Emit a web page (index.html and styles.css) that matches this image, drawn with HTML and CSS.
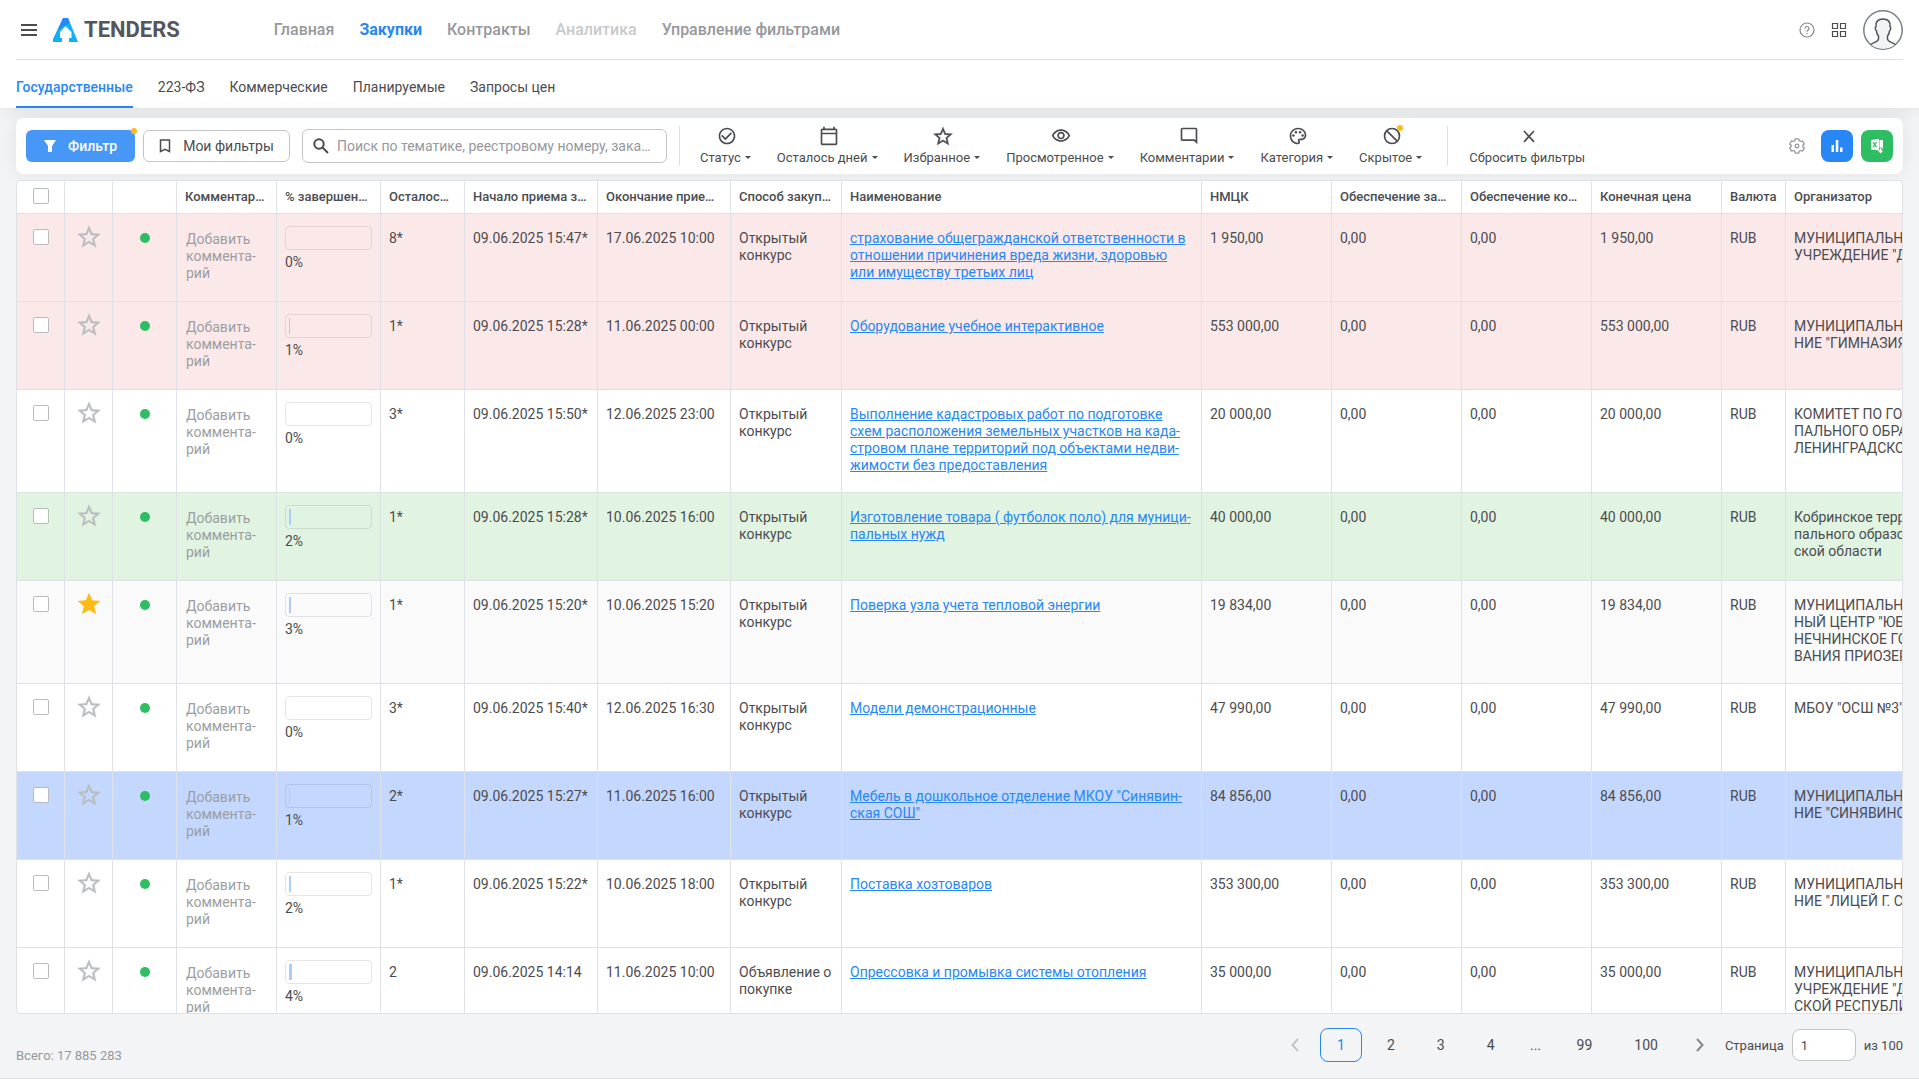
FILE: index.html
```html
<!doctype html>
<html lang="ru">
<head>
<meta charset="utf-8" />
<meta name="viewport" content="width=device-width,initial-scale=1" />
<title>Tenders - Закупки</title>
<link rel="stylesheet" href="styles.css">
</head>
<body>

<!-- icon sprite -->
<svg class="sprite" aria-hidden="true">
  <symbol id="i-star" viewBox="1.500 1.500 21 20"><path stroke="currentColor" stroke-width=".3" d="M22 9.24l-7.19-.62L12 2 9.19 8.63 2 9.24l5.46 4.73L5.82 21 12 17.27 18.18 21l-1.63-7.03L22 9.24zM12 15.4l-3.76 2.27 1-4.28-3.32-2.88 4.38-.38L12 6.1l1.71 4.04 4.38.38-3.32 2.88 1 4.28L12 15.4z"/></symbol>
  <symbol id="i-star-full" viewBox="1.500 1.500 21 20"><path d="M12 17.27L18.18 21l-1.64-7.03L22 9.24l-7.19-.61L12 2 9.19 8.63 2 9.24l5.46 4.73L5.82 21z"/></symbol>
  <symbol id="i-check" viewBox="0 0 24 24"><path d="M16.59 7.58L10 14.17l-3.59-3.58L5 12l5 5 8-8zM12 2C6.48 2 2 6.48 2 12s4.480 10 10 10 10-4.480 10-10S17.520 2 12 2zm0 18c-4.420 0-8-3.580-8-8s3.580-8 8-8 8 3.580 8 8-3.580 8-8 8z"/></symbol>
  <symbol id="i-calendar" viewBox="0 0 24 24"><path d="M20 3h-1V1h-2v2H7V1H5v2H4c-1.100 0-2 .9-2 2v16c0 1.100.9 2 2 2h16c1.100 0 2-.9 2-2V5c0-1.100-.9-2-2-2zm0 18H4V10h16v11zm0-13H4V5h16v3z"/></symbol>
  <symbol id="i-eye" viewBox="0 0 24 24"><path d="M12 6c3.790 0 7.170 2.130 8.820 5.500C19.170 14.870 15.790 17 12 17s-7.170-2.130-8.820-5.500C4.830 8.130 8.210 6 12 6m0-2C7 4 2.730 7.110 1 11.500 2.730 15.890 7 19 12 19s9.270-3.110 11-7.500C21.270 7.110 17 4 12 4zm0 5c1.380 0 2.500 1.120 2.500 2.500S13.380 14 12 14s-2.500-1.120-2.500-2.500S10.620 9 12 9m0-2c-2.480 0-4.500 2.020-4.500 4.500S9.520 16 12 16s4.500-2.020 4.500-4.500S14.480 7 12 7z"/></symbol>
  <symbol id="i-comment" viewBox="0 0 24 24"><path d="M22 4c0-1.100-.9-2-2-2H4c-1.100 0-2 .9-2 2v12c0 1.100.9 2 2 2h14l4 4V4zm-2 13.170L18.830 16H4V4h16v13.170z"/></symbol>
  <symbol id="i-palette" viewBox="0 0 24 24"><path d="M12 22C6.490 22 2 17.510 2 12S6.490 2 12 2s10 4.040 10 9c0 3.310-2.690 6-6 6h-1.770c-.28 0-.5.22-.5.5 0 .12.050.23.130.33.41.47.64 1.060.64 1.670A2.500 2.500 0 0 1 12 22zm0-18c-4.410 0-8 3.590-8 8s3.590 8 8 8c.28 0 .5-.22.5-.5a.54.54 0 0 0-.14-.35c-.41-.46-.63-1.050-.63-1.650a2.500 2.500 0 0 1 2.500-2.500H16c2.210 0 4-1.790 4-4 0-3.860-3.590-7-8-7z"/><circle cx="6.500" cy="11.500" r="1.500"/><circle cx="9.500" cy="7.500" r="1.500"/><circle cx="14.500" cy="7.500" r="1.500"/><circle cx="17.500" cy="11.500" r="1.500"/></symbol>
  <symbol id="i-hidden" viewBox="0 0 24 24"><circle cx="12" cy="12" r="9" fill="none" stroke="currentColor" stroke-width="2"/><path d="M5.500 5.500l13 13" stroke="currentColor" stroke-width="2"/></symbol>
  <symbol id="i-close" viewBox="0 0 24 24"><path d="M6 6l12 13M18 6L6 19" fill="none" stroke="currentColor" stroke-width="2"/></symbol>
</svg>

<header class="header">
  <div class="topbar">
    <button class="icon-btn burger" aria-label="Меню"><svg width="16" height="12" viewBox="0 0 16 12"><path d="M0 1h16M0 6h16M0 11h16" stroke="currentColor" stroke-width="2"/></svg></button>
    <a class="logo" href="#">
      <svg width="25" height="24" viewBox="0 0 25 24"><path d="M10 0h5l10 24h-9v-4h2.500v-6L12.500 8 7 14v6h2v4H0v-3z" fill="#0eb0f8"/><path d="M10 0h5l2 5-4.500 2-7.500 5z" fill="#2a86fb"/></svg>
      <span>TENDERS</span>
    </a>
    <nav class="nav">
      <a href="#">Главная</a>
      <a href="#" class="active">Закупки</a>
      <a href="#">Контракты</a>
      <a href="#" class="disabled">Аналитика</a>
      <a href="#">Управление фильтрами</a>
    </nav>
    <div class="user">
      <button class="icon-btn help" aria-label="Помощь"><svg width="16" height="16" viewBox="0 0 16 16" fill="none" stroke="currentColor" stroke-width="1.200"><circle cx="8" cy="8" r="7"/><path d="M6 6.500c0-2.700 4-2.700 4 0C10 8 8 8 8 9.700M8 11v1.200"/></svg></button>
      <button class="icon-btn" aria-label="Сервисы"><svg width="16" height="16" viewBox="0 0 16 16" fill="none" stroke="currentColor" stroke-width="1.200"><path d="M1.500 1.500h5v5h-5zM9.500 1.500h5v5h-5zM1.500 9.500h5v5h-5zM9.500 9.500h5v5h-5z"/></svg></button>
      <button class="icon-btn" aria-label="Профиль"><svg width="40" height="40" viewBox="0 0 40 40"><circle cx="20" cy="20" r="19.200" fill="#fff" stroke="#76808a" stroke-width="1.500"/><path d="M8.500 35c1-3 6.500-1.500 7-5v-4c-1.500-1-2-3-2-5-1.500-1-1.500-4-.5-4.500-.5-5 2-7.500 7-7.500s7.500 2.500 7 7.500c1 .5 1 3.500-.5 4.500 0 2-.5 4-2 5v4c.5 3.500 6 2 7 5-6 5-17 5-23 0z" fill="#f1f3f5"/><path d="M8 34.500c2-2.500 7-2 7.500-5.500v-3c-1.500-1.500-2-3-2-5-1.500-1-1.500-4-.5-4.500-.5-5 2-7.500 7-7.500s7.500 2.500 7 7.500c1 .5 1 3.500-.5 4.500 0 2-.5 3.500-2 5v3c.5 3.500 5.500 3 7.500 5.500" fill="none" stroke="#505256" stroke-width="1.500"/></svg></button>
    </div>
  </div>
  <nav class="tabs">
    <a href="#" class="active">Государственные</a>
    <a href="#">223-ФЗ</a>
    <a href="#">Коммерческие</a>
    <a href="#">Планируемые</a>
    <a href="#">Запросы цен</a>
  </nav>
</header>

<main class="content">
  <div class="toolbar">
    <button class="btn btn-filter"><svg width="12" height="12" viewBox="0 0 12 12" fill="currentColor"><path d="M0 0h12L8 6v6H4V6z"/></svg>Фильтр<i class="badge"></i></button>
    <button class="btn btn-outline"><svg width="12" height="14" viewBox="0 0 12 14" fill="none" stroke="currentColor" stroke-width="1.500"><path d="M1.500 1h9v11.500L6 10.300l-4.500 2.200z"/></svg>Мои фильтры</button>
    <label class="search">
      <svg width="16" height="16" viewBox="0 0 16 16" fill="none" stroke="currentColor" stroke-width="2"><circle cx="6" cy="6" r="4.700"/><path d="M9.500 9.500L15 15"/></svg>
      <input type="text" aria-label="Поиск" placeholder="Поиск по тематике, реестровому номеру, заказчику">
    </label>
    <div class="quick">
      <button class="q"><svg><use href="#i-check"/></svg><span class="caret">Статус</span></button>
      <button class="q"><svg><use href="#i-calendar"/></svg><span class="caret">Осталось дней</span></button>
      <button class="q"><svg><use href="#i-star"/></svg><span class="caret">Избранное</span></button>
      <button class="q"><svg><use href="#i-eye"/></svg><span class="caret">Просмотренное</span></button>
      <button class="q"><svg><use href="#i-comment"/></svg><span class="caret">Комментарии</span></button>
      <button class="q"><svg><use href="#i-palette"/></svg><span class="caret">Категория</span></button>
      <button class="q"><span class="q-icon"><svg><use href="#i-hidden"/></svg><i class="badge"></i></span><span class="caret">Скрытое</span></button>
    </div>
    <button class="q"><svg><use href="#i-close"/></svg><span>Сбросить фильтры</span></button>
    <div class="actions">
      <button class="icon-btn gear" aria-label="Настройки"><svg width="16" height="16" viewBox="0 0 16 16" fill="none" stroke="currentColor" stroke-width="1.300"><path d="M6.200.8h3.600l.5 2 1.200.7 2-.6 1.800 3.100L13.900 7.300v1.400l1.400 1.300-1.800 3.100-2-.6-1.200.7-.5 2H6.200l-.5-2-1.200-.7-2 .6L.7 10l1.400-1.300V7.300L.7 6l1.800-3.100 2 .6 1.200-.7z" stroke-linejoin="round"/><circle cx="8" cy="8" r="1.800"/></svg></button>
      <button class="sq sq-blue" aria-label="Диаграмма"><svg width="12" height="12" viewBox="0 0 12 12" fill="currentColor"><path d="M.5 5h2.500v7H.5zM4.800 0h2.500v12H4.800zM9 7.500h2.500V12H9z"/></svg></button>
      <button class="sq sq-green" aria-label="Экспорт в Excel"><svg width="14" height="16" viewBox="0 0 14 16"><path d="M1 2l8-1v11.500L1 11.500z" fill="#fff"/><path d="M9.500 2H13v8.500h-1v-1H9.500z" fill="#fff"/><path d="M3 4.200l3.500 5M6.500 4.200L3 9.200" stroke="#2dbd62" stroke-width="1.200"/><path d="M10.500 10v4M8.700 12.500l1.800 2 1.800-2" fill="none" stroke="#fff" stroke-width="1.300"/></svg></button>
    </div>
  </div>

  <div class="table-wrap">
    <table class="grid">
      <colgroup>
        <col class="c-check"><col class="c-check"><col class="c-dot"><col class="c-comment"><col class="c-progress"><col class="c-left">
        <col class="c-date"><col class="c-date"><col class="c-type"><col class="c-name"><col class="c-sum"><col class="c-sum"><col class="c-sum"><col class="c-sum"><col class="c-dot"><col class="c-org">
      </colgroup>
      <thead>
        <tr>
          <th class="check"><input type="checkbox" aria-label="Выбрать все"></th><th></th><th></th>
          <th>Комментарий</th><th>% завершения</th><th>Осталось дней</th><th>Начало приема заявок</th><th>Окончание приема заявок</th>
          <th>Способ закупки</th><th>Наименование</th><th>НМЦК</th><th>Обеспечение заявки</th><th>Обеспечение контр.</th>
          <th>Конечная цена</th><th>Валюта</th><th>Организатор</th>
        </tr>
      </thead>
      <tbody id="rows"></tbody>
    </table>
  </div>
</main>

<footer class="footer">
  <span class="total">Всего: 17 885 283</span>
  <nav class="pager">
    <button class="arrow prev" aria-label="Назад"><svg width="8" height="14" viewBox="0 0 8 14" fill="none" stroke="currentColor" stroke-width="2"><path d="M7 1L1.500 7 7 13"/></svg></button>
    <button class="page current">1</button>
    <button class="page">2</button>
    <button class="page">3</button>
    <button class="page">4</button>
    <span class="dots">...</span>
    <button class="page">99</button>
    <button class="page">100</button>
    <button class="arrow" aria-label="Вперед"><svg width="8" height="14" viewBox="0 0 8 14" fill="none" stroke="currentColor" stroke-width="2"><path d="M1 1l5.500 6L1 13"/></svg></button>
    <label class="goto">Страница <input type="text" value="1"> из 100</label>
  </nav>
</footer>

<script>
  // color, starred, percent, days left, start, end, type, name, price, organizer
  const open='Открытый конкурс';
  const data=[
    ['red',0,0,'8*','09.06.2025 15:47*','17.06.2025 10:00',open,'страхование общегражданской ответственности в отношении причинения вреда жизни, здоровью или имуществу третьих лиц','1 950,00','МУНИЦИПАЛЬНОЕ БЮДЖЕТНОЕ<br>УЧРЕЖДЕНИЕ "ДОМ КУЛЬТУРЫ"'],
    ['red',0,1,'1*','09.06.2025 15:28*','11.06.2025 00:00',open,'Оборудование учебное интерактивное','553 000,00','МУНИЦИПАЛЬНОЕ УЧРЕЖДЕ-<br>НИЕ "ГИМНАЗИЯ"'],
    ['',0,0,'3*','09.06.2025 15:50*','12.06.2025 23:00',open,'Выполнение кадастровых работ по подготовке схем расположения земельных участков на када&shy;стровом плане территорий под объектами недви&shy;жимости без предоставления','20 000,00','КОМИТЕТ ПО ГОРОДСКОМУ<br>ПАЛЬНОГО ОБРАЗОВАНИЯ<br>ЛЕНИНГРАДСКОЙ ОБЛАСТИ'],
    ['green',0,2,'1*','09.06.2025 15:28*','10.06.2025 16:00',open,'Изготовление товара ( футболок поло) для муници&shy;пальных нужд','40 000,00','Кобринское территориальное<br>пального образования<br>ской области'],
    ['gray',1,3,'1*','09.06.2025 15:20*','10.06.2025 15:20',open,'Поверка узла учета тепловой энергии','19 834,00','МУНИЦИПАЛЬНОЕ УЧРЕЖДЕНИЕ<br>НЫЙ ЦЕНТР "ЮБИЛЕЙНЫЙ"<br>НЕЧНИНСКОЕ ГОРОДСКОЕ<br>ВАНИЯ ПРИОЗЕРСКИЙ РАЙОН'],
    ['',0,0,'3*','09.06.2025 15:40*','12.06.2025 16:30',open,'Модели демонстрационные','47 990,00','МБОУ "ОСШ №3"'],
    ['blue',0,1,'2*','09.06.2025 15:27*','11.06.2025 16:00',open,'Мебель в дошкольное отделение МКОУ "Синявин&shy;ская СОШ"','84 856,00','МУНИЦИПАЛЬНОЕ УЧРЕЖДЕ-<br>НИЕ "СИНЯВИНСКАЯ СОШ"'],
    ['',0,2,'1*','09.06.2025 15:22*','10.06.2025 18:00',open,'Поставка хозтоваров','353 300,00','МУНИЦИПАЛЬНОЕ УЧРЕЖДЕ-<br>НИЕ "ЛИЦЕЙ Г. СВЕТОГОРСК"'],
    ['',0,4,'2','09.06.2025 14:14','11.06.2025 10:00','Объявление о покупке','Опрессовка и промывка системы отопления','35 000,00','МУНИЦИПАЛЬНОЕ БЮДЖЕТНОЕ<br>УЧРЕЖДЕНИЕ "ДЕТСКИЙ САД"<br>СКОЙ РЕСПУБЛИКИ']
  ];

  document.getElementById('rows').innerHTML=data.map(([color,star,pct,left,start,end,type,name,price,org])=>`
    <tr class="${color}">
      <td class="check"><input type="checkbox" aria-label="Выбрать"></td>
      <td class="fav"><button class="icon-btn ${star?'on':''}" aria-label="Избранное"><svg width="24" height="23"><use href="#i-star${star?'-full':''}"/></svg></button></td>
      <td class="state"><i class="dot"></i></td>
      <td><button class="add-comment">Добавить коммента&shy;рий</button></td>
      <td class="progress"><div class="bar"><div class="fill" style="width:${pct}%"></div></div>${pct}%</td>
      <td>${left}</td><td>${start}</td><td>${end}</td><td>${type}</td>
      <td><a href="#">${name}</a></td>
      <td>${price}</td><td>0,00</td><td>0,00</td><td>${price}</td><td>RUB</td>
      <td class="org">${org}</td>
    </tr>`).join('');
</script>

</body>
</html>
```
FILE: styles.css
```css
*{box-sizing:border-box}
body{font-family:Roboto,"Liberation Sans",sans-serif; font-size:14px; line-height:17px; color:#4b4c50; background:#f3f4f6; margin:0; height:100vh; display:flex; flex-direction:column; overflow:hidden}
button,input{font:inherit;color:inherit}
button{background:none;border:none;padding:0;cursor:pointer}
a{text-decoration:none}
svg{display:block;flex:none}
.sprite{display:none}
.icon-btn{display:flex;align-items:center}

/* header */
.header{background:#fff;padding:0 16px;box-shadow:0 2px 16px rgba(0,0,0,0.08)}
.topbar{height:60px;display:flex;align-items:center;border-bottom:1px solid #dfe0e2}
.burger{margin:0 16px 0 5px}
.logo{display:flex;align-items:center;gap:6px;font-size:22px;font-weight:700;color:#55565c}
.nav{display:flex;gap:25px;margin-left:94px;font-size:16px;font-weight:500}
.nav a{color:#96989c}
.nav a.active{color:#2787f5;font-weight:700}
.nav a.disabled{color:#c8c9cc}
.user{display:flex;align-items:center;gap:16px;margin-left:auto}
.help{color:#85878b}
.tabs{display:flex;gap:25px}
.tabs a{height:48px;padding-top:19px;color:#4b4c50}
.tabs a.active{color:#2787f5;font-weight:500;border-bottom:2px solid #2787f5}

/* filters bar */
.content{flex:1;min-height:0;display:flex;flex-direction:column;gap:6px;padding:10px 16px 0}
.toolbar{display:flex;align-items:center;height:56px;flex:none;padding:0 10px;background:#fff;border-radius:8px;box-shadow:0 0 20px rgba(0,0,0,0.08)}
.btn{position:relative;display:flex;align-items:center;justify-content:center;height:32px;border-radius:6px}
.btn-filter{width:109px;gap:12px;background:#4797f6;color:#fff;font-weight:500}
.btn-outline{width:147px;gap:12px;margin-left:8px;border:1px solid #c3c4c8}
.badge{position:absolute;top:-2px;right:-2px;width:6px;height:6px;border-radius:50%;background:#fdbc15}
.search{display:flex;align-items:center;gap:8px;width:365px;height:34px;margin-left:12px;padding:0 10px;border:1px solid #c3c4c8;border-radius:6px}
.search input{flex:1;min-width:0;padding:0;border:none;outline:none;background:none;text-overflow:ellipsis}
.search input::placeholder{color:#96989c;opacity:1}
.quick{display:flex;gap:26px;height:40px;align-items:center;margin:0 21px 0 12px;padding:0 25px 0 20px;border-left:1px solid #dfe0e2;border-right:1px solid #dfe0e2}
.q{display:flex;flex-direction:column;align-items:center;gap:3px;font-size:13px;white-space:nowrap}
.q svg{width:20px;height:20px;margin-left:3px;fill:currentColor}
.q-icon{position:relative}
.q-icon .badge{top:-1px;right:-1px}
.caret{display:flex;align-items:center;gap:4px}
.caret::after{content:"";border:3px solid transparent;border-top-color:currentColor;border-bottom:0}
.actions{display:flex;align-items:center;gap:8px;margin-left:auto}
.gear{color:#96989c;margin-right:8px}
.sq{display:flex;align-items:center;justify-content:center;width:32px;height:32px;border-radius:8px;color:#fff}
.sq-blue{background:#2787f5}
.sq-green{background:#2dbd62}

/* table */
.table-wrap{flex:1;min-height:0;overflow:hidden;background:#fff;border:1px solid #dee1e5;border-radius:4px}
.grid{width:2200px;table-layout:fixed;border-collapse:separate;border-spacing:0}
.c-check{width:48px}
.c-dot{width:64px}
.c-comment{width:100px}
.c-progress{width:104px}
.c-left{width:84px}
.c-date{width:133px}
.c-type{width:111px}
.c-name{width:360px}
.c-sum{width:130px}
.grid th,.grid td{text-align:left;border-right:1px solid #dee1e5;border-bottom:1px solid #dee1e5}
.grid th{height:33px;padding:0 8px 2px;font-size:13px;font-weight:500;white-space:nowrap;overflow:hidden;text-overflow:ellipsis}
.grid td{height:88px;padding:16px 8px 18px;vertical-align:top}
.grid .check{padding:0 16px 2px;text-overflow:clip}
.grid td.check{padding-top:15px}
.grid input{appearance:none;display:block;width:16px;height:16px;margin:0;background:#fff;border:1px solid #b9bbbf;border-radius:2px}
.grid td.fav{padding:11px 11px 0 12px}
.fav svg{fill:currentColor}
.fav .icon-btn{color:#bbbdc1}
.fav .on{color:#fdbc15}
.state .dot{display:block;width:10px;height:10px;margin:3px auto 0;border-radius:50%;background:#2dbd62}
.add-comment{display:block;padding:1px;text-align:left;color:#9c9ea2}
.grid td.progress{padding-top:12px;padding-bottom:0}
.bar{height:24px;margin-bottom:4px;padding:3px;border:1px solid rgba(90,90,100,0.15);border-radius:4px}
.fill{height:16px;background:#a9cdfd}
.org{white-space:nowrap}
.grid a{color:#2787f5;text-decoration:underline}
.red td{background:#fbe9e9}
.green td{background:#e1f4e1}
.gray td{background:#fafafa}
.blue td{background:#c3d7ff}

/* footer */
.footer{display:flex;justify-content:space-between;height:65px;flex:none;padding:14px 16px 0;border-bottom:1px solid #dfe0e2}
.total{margin-top:19px;font-size:13px;color:#96989c}
.pager{display:flex;align-items:center;gap:8px;height:34px}
.page{height:34px;padding:0 17px;border-radius:8px}
.current{padding:0 16px;border:1px solid #2787f5;color:#2787f5}
.dots{width:32px;text-align:center}
.arrow{display:flex;justify-content:center;width:34px;color:#85878b}
.prev{color:#c3c4c8}
.goto{display:flex;align-items:center;gap:8px;font-size:13px}
.goto input{width:64px;height:32px;padding:0 8px;background:#fff;border:1px solid #c3c4c8;border-radius:8px}
```
